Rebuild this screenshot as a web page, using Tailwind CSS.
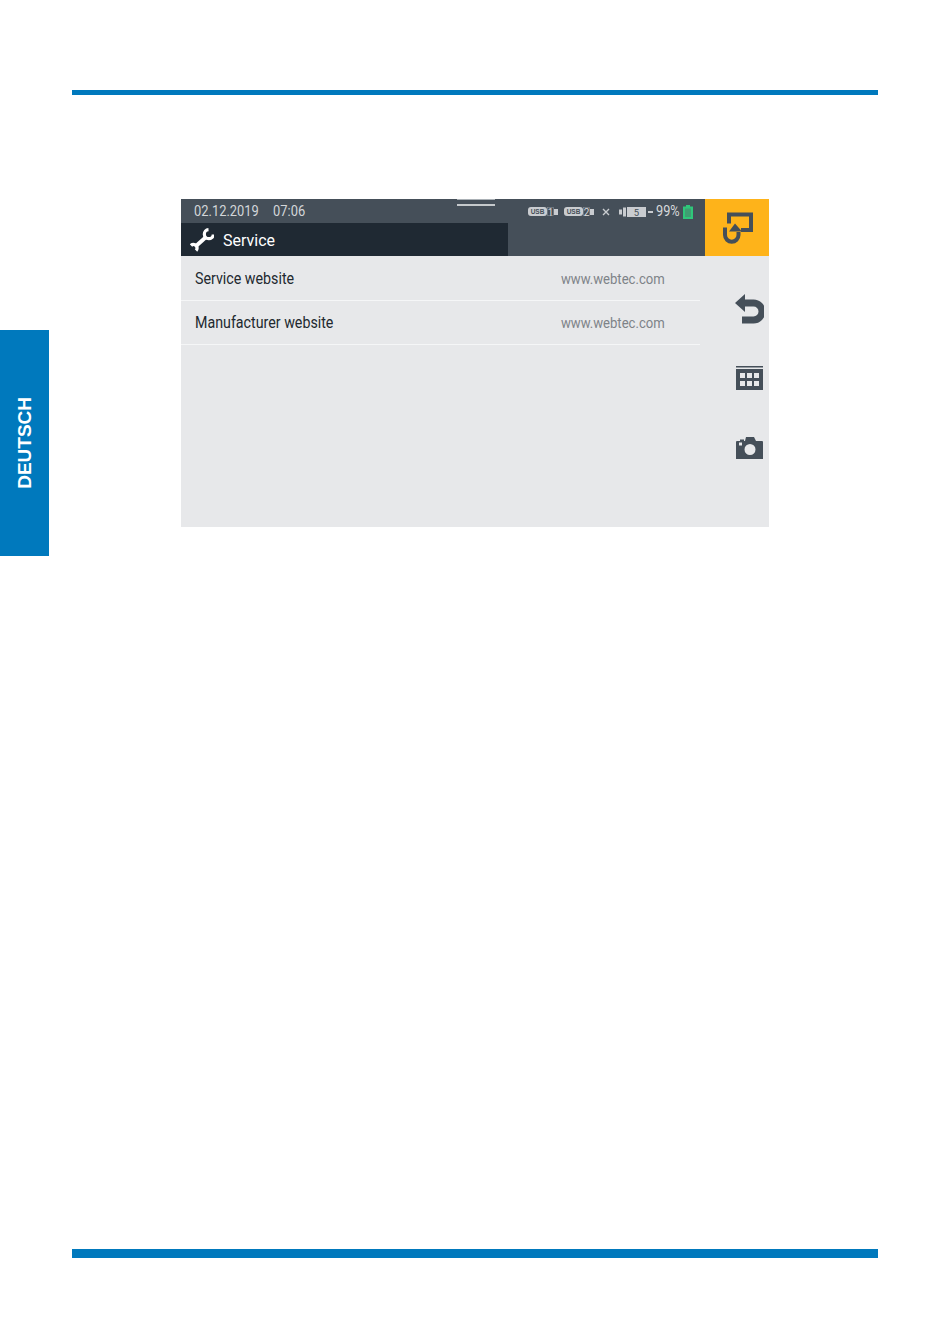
<!doctype html>
<html>
<head>
<meta charset="utf-8" />
<script src="https://cdn.jsdelivr.net/npm/@tailwindcss/browser@4"></script>
</head>
<body class="bg-white">
<div class="relative h-[1344px] w-[950px] flex flex-col px-[72px] pt-[90px] pb-[86px] overflow-hidden">
  <!-- top rule -->
  <div class="h-[5px] bg-[#0079bd]"></div>

  <!-- language tab -->
  <div class="absolute left-0 top-[330px] w-[49px] h-[226px] bg-[#0079bd] flex items-center justify-center">
    <span class="[writing-mode:vertical-rl] rotate-180 text-white font-bold text-[19px] leading-none font-['Liberation_Sans',sans-serif]">DEUTSCH</span>
  </div>

  <!-- device screen -->
  <div class="relative mt-[104px] ml-[109px] w-[588px] h-[328px] bg-[#e7e8ea] flex flex-col font-['Roboto',sans-serif]">
    <!-- header -->
    <div class="h-[57px] bg-[#454f59] flex shrink-0">
      <div class="flex-1 flex flex-col">
        <div class="h-[24px] flex items-center justify-between pl-[13px] pr-[12px] pt-[1px]">
          <div class="flex gap-[6px] text-[14.5px] text-[#d3d6d9]">
            <span class="origin-left scale-x-[0.89]">02.12.2019</span>
            <span class="origin-left scale-x-[0.89]">07:06</span>
          </div>
          <div class="flex items-center text-[#d8dadc]">
            <svg width="30" height="11" viewBox="0 0 30 11">
              <rect x="0" y="1" width="19" height="9" rx="3" fill="#c9ccd0"/>
              <text x="9.500" y="8" text-anchor="middle" font-size="6.500" font-weight="700" font-family="Liberation Sans" fill="#454f59">USB</text>
              <rect x="19.500" y="1.500" width="6" height="8" fill="none" stroke="#8a9198" stroke-width="0.600"/>
              <text x="22.500" y="9.500" text-anchor="middle" font-size="10" font-family="Roboto" fill="#d8dadc">1</text>
              <rect x="26" y="3" width="4" height="6" fill="#c9ccd0"/>
            </svg>
            <svg width="30" height="11" viewBox="0 0 30 11" class="ml-[6px]">
              <rect x="0" y="1" width="19" height="9" rx="3" fill="#c9ccd0"/>
              <text x="9.500" y="8" text-anchor="middle" font-size="6.500" font-weight="700" font-family="Liberation Sans" fill="#454f59">USB</text>
              <rect x="19.500" y="1.500" width="6" height="8" fill="none" stroke="#8a9198" stroke-width="0.600"/>
              <text x="22.500" y="9.500" text-anchor="middle" font-size="10" font-family="Roboto" fill="#d8dadc">2</text>
              <rect x="26" y="3" width="4" height="6" fill="#c9ccd0"/>
            </svg>
            <svg width="8" height="8" viewBox="0 0 8 8" class="ml-[8px]">
              <path d="M1 1l6 6M7 1l-6 6" stroke="#c9ccd0" stroke-width="1.400"/>
            </svg>
            <svg width="34" height="12" viewBox="0 0 34 12" class="ml-[9px]">
              <path d="M0 3.500h3v5H0zM4 1.500h3v9H4z" fill="#c9ccd0"/>
              <rect x="8" y="1" width="19" height="10" fill="#c9ccd0"/>
              <text x="17.500" y="9.500" text-anchor="middle" font-size="9.500" font-family="Roboto" fill="#454f59">5</text>
              <rect x="29" y="5" width="5" height="2" fill="#c9ccd0"/>
            </svg>
            <span class="ml-[3px] text-[14.5px] w-[24px] whitespace-nowrap origin-left scale-x-[0.88]">99%</span>
            <svg width="10" height="14" viewBox="0 0 10 14" class="ml-[3px]">
              <path d="M3 0h4v1.500h3V14H0V1.500h3z" fill="#2fc77a"/>
              <rect x="2" y="3.500" width="6" height="8.500" fill="#3f9f72"/>
            </svg>
          </div>
        </div>
        <div class="w-[327px] h-[33px] bg-[#1f2933] flex items-center pl-[9px] text-white">
          <svg width="24" height="24" viewBox="0 0 24 24" class="shrink-0" fill="none" stroke="#fff" stroke-width="3.200">
            <path d="M18.500 1.700A4.500 4.500 0 1 0 23.300 6.500"/>
            <path d="M15.500 9.500L6 18" stroke-width="3.800"/>
            <path d="M1 17.500A3.200 3.200 0 0 1 6 22.500" stroke-width="3.400"/>
          </svg>
          <span class="ml-[9px] text-[17px] pt-[2px] origin-left scale-x-[0.94]">Service</span>
        </div>
      </div>
      <div class="w-[64px] bg-[#feb31a] flex items-center justify-center">
        <svg width="32" height="34" viewBox="0 0 32 34" fill="none" stroke="#454f59" stroke-width="4">
          <path d="M8 12.500V3.500h22V19H20"/>
          <path d="M4 16.500V24a6.750 6.750 0 0 0 13.500 0v-3"/>
          <path d="M14 12.500l7 8H8z" fill="#454f59" stroke="none"/>
        </svg>
      </div>
    </div>

    <!-- handle -->
    <div class="absolute left-[276px] top-0 w-[38px] h-[7px] flex flex-col justify-between">
      <div class="h-[1px] bg-[#aab0b5]"></div>
      <div class="h-[2px] bg-[#c5c9cc]"></div>
    </div>

    <!-- body -->
    <div class="flex-1 flex">
      <div class="w-[519px]">
        <div class="h-[45px] pl-[14px] pr-[35px] pt-[2px] flex items-center justify-between border-b border-[#f5f6f7]">
          <span class="text-[16px] text-[#22292f] origin-left scale-x-[0.89]">Service website</span>
          <span class="text-[14.5px] text-[#7e8388] pt-[1px] origin-right scale-x-[0.905]">www.webtec.com</span>
        </div>
        <div class="h-[44px] pl-[14px] pr-[35px] flex items-center justify-between border-b border-[#f5f6f7]">
          <span class="text-[16px] text-[#22292f] origin-left scale-x-[0.89]">Manufacturer website</span>
          <span class="text-[14.5px] text-[#7e8388] pt-[2px] origin-right scale-x-[0.905]">www.webtec.com</span>
        </div>
      </div>
      <div class="flex-1 flex flex-col items-end pr-[5px] pt-[38px]">
        <svg width="29" height="30" viewBox="0 0 29 30" fill="#454f59">
          <path d="M10 0L0 9l10 9v-5.500h8.500a4.500 4.500 0 0 1 0 10H7v7h11.500a12 12 0 0 0 0-24H10z"/>
        </svg>
        <svg width="27" height="24" viewBox="0 0 27 24" class="mt-[42px] mr-[1px]" fill="#454f59">
          <path fill-rule="evenodd" d="M0 0h27v1.500H0zM0 3h27v21H0zM4 7v5h5V7zM11 7v5h5V7zM18 7v5h5V7zM4 15v5h5v-5zM11 15v5h5v-5zM18 15v5h5v-5z"/>
        </svg>
        <svg width="27" height="22" viewBox="0 0 27 22" class="mt-[47px] mr-[1px]" fill="#454f59">
          <path fill-rule="evenodd" d="M1 4h3V2.500h4V4h1l1-4h8l2 4h6a1 1 0 0 1 1 1v17H0V5a1 1 0 0 1 1-1zM14 7a5.500 5.500 0 1 0 0 11 5.500 5.500 0 0 0 0-11zM3 5.500v3h3v-3z"/>
        </svg>
      </div>
    </div>
  </div>

  <!-- bottom rule -->
  <div class="mt-auto h-[9px] bg-[#0079bd]"></div>
</div>
</body>
</html>
